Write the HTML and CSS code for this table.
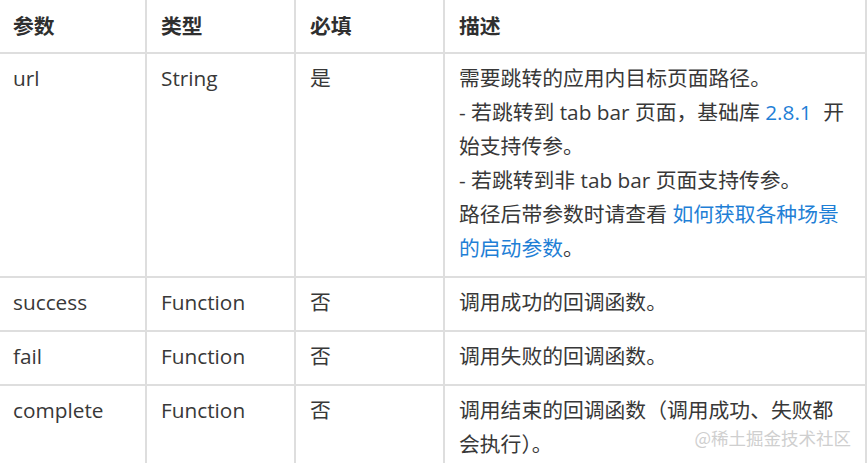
FILE: index.html
```html
<!DOCTYPE html>
<html lang="zh-CN">
<head>
<meta charset="utf-8">
<title>参数</title>
<link rel="stylesheet" href="styles.css">
</head>
<body>
<div class="page">
  <table class="params">
    <colgroup>
      <col class="c1"><col class="c2"><col class="c3"><col class="c4">
    </colgroup>
    <thead>
      <tr><th>参数</th><th>类型</th><th>必填</th><th>描述</th></tr>
    </thead>
    <tbody>
      <tr>
        <td>url</td><td>String</td><td>是</td>
        <td>需要跳转的应用内目标页面路径。<br>- 若跳转到 tab bar 页面，基础库 <a class="link ver" href="#">2.8.1</a> 开始支持传参。<br>- 若跳转到非 tab bar 页面支持传参。<br>路径后带参数时请查看 <a class="link" href="#">如何获取各种场景的启动参数</a>。</td>
      </tr>
      <tr><td>success</td><td>Function</td><td>否</td><td>调用成功的回调函数。</td></tr>
      <tr><td>fail</td><td>Function</td><td>否</td><td>调用失败的回调函数。</td></tr>
      <tr><td>complete</td><td>Function</td><td>否</td><td>调用结束的回调函数（调用成功、失败都会执行）。</td></tr>
    </tbody>
  </table>
  <div class="watermark">@稀土掘金技术社区</div>
</div>
</body>
</html>
```
FILE: styles.css
```css
html, body {
  margin: 0;
  padding: 0;
  overflow: hidden;
  background: #ffffff;
}
.page {
  position: relative;
  width: 867px;
  height: 463px;
  overflow: hidden;
  font-family: "Open Sans", "Noto Sans CJK SC", sans-serif;
  font-size: 20.8px;
  color: #383838;
}
.params {
  border-collapse: separate;
  border-spacing: 0;
  table-layout: fixed;
  width: 867px;
}
.c1 { width: 147px; }
.c2 { width: 149px; }
.c3 { width: 149px; }
.c4 { width: 422px; }
.params th,
.params td {
  text-align: left;
  vertical-align: top;
  padding: 7px 13px 11px 14px;
  line-height: 34px;
  border-right: 2px solid #dedede;
  border-bottom: 2px solid #dedede;
  word-break: break-all;
}
.params th {
  padding-top: 9px;
  padding-bottom: 9px;
}
.params th:first-child,
.params td:first-child { padding-left: 13px; }
.params th {
  font-weight: 700;
  color: #2f2f2f;
}
.link {
  color: #1f7fd6;
  text-decoration: none;
}
.ver {
  margin-right: 6px;
}
.watermark {
  position: absolute;
  right: 16px;
  bottom: 14px;
  font-size: 17.5px;
  line-height: 22px;
  color: #cfcfcf;
  font-family: "Noto Sans CJK SC", sans-serif;
}
```
